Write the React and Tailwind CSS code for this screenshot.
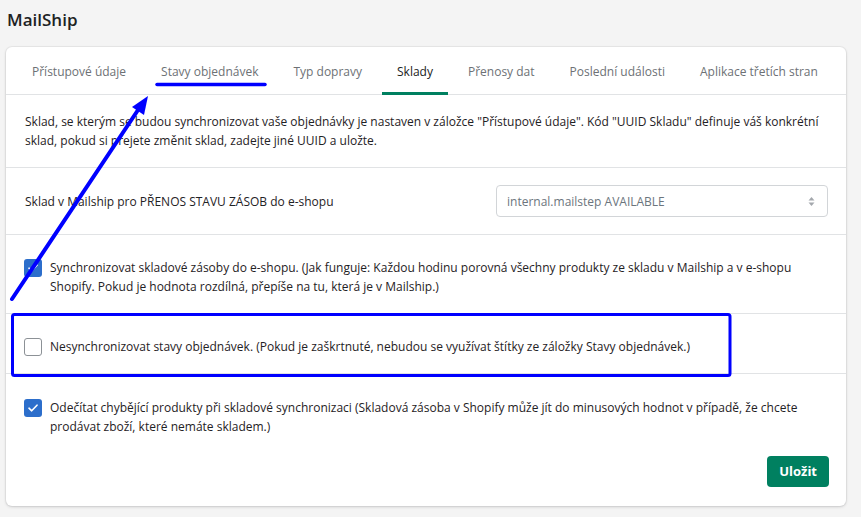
const tabs = [
  'Přístupové údaje',
  'Stavy objednávek',
  'Typ dopravy',
  'Sklady',
  'Přenosy dat',
  'Poslední události',
  'Aplikace třetích stran',
];

const Checkbox = ({ checked }) =>
  checked ? (
    <span className="mt-[1px] flex h-[18px] w-[18px] shrink-0 items-center justify-center rounded-[3px] bg-[#2c6ecb]">
      <svg width="10" height="8" viewBox="0 0 10 8" fill="none">
        <path d="M1 4.2 3.7 6.8 9 1.2" stroke="white" strokeWidth="1.6" strokeLinecap="round" strokeLinejoin="round" />
      </svg>
    </span>
  ) : (
    <span className="mt-[1px] h-[18px] w-[18px] shrink-0 rounded-[3px] border border-[#8c9196] bg-white" />
  );

const CheckRow = ({ checked, children }) => (
  <div className="flex gap-[8px]">
    <Checkbox checked={checked} />
    <p>{children}</p>
  </div>
);

export default function App() {
  return (
    <div className="relative min-h-screen bg-[#f4f4f4] font-['Open_Sans',sans-serif] text-[12px] leading-[19px] text-[#1f2225]">
      <h1 className="px-[7px] pt-[7px] pb-[15px] text-[17px] leading-[25px] font-semibold text-[#202223]">MailShip</h1>

      <div className="ml-[6px] w-[840px] rounded-[6px] bg-white shadow-[0_0_0_1px_rgba(63,63,68,0.05),0_1px_3px_rgba(63,63,68,0.2)]">
        <div className="flex gap-[5px] border-b border-[#e1e3e5] pl-[11px]">
          {tabs.map((t) => (
            <div
              key={t}
              className={`-mb-px flex h-[48px] items-center border-b-[3px] px-[15px] pt-[3px] whitespace-nowrap ${
                t === 'Sklady' ? 'border-[#008060] text-[#202223]' : 'border-transparent text-[#6d7175]'
              }`}
            >
              {t}
            </div>
          ))}
        </div>

        <div className="border-b border-[#e1e3e5] px-[19px] py-[17px]">
          <p>
            Sklad, se kterým se budou synchronizovat vaše objednávky je nastaven v záložce "Přístupové údaje". Kód "UUID Skladu" definuje váš konkrétní sklad, pokud si přejete změnit sklad, zadejte jiné UUID a uložte.
          </p>
        </div>

        <div className="flex items-center justify-between border-b border-[#e1e3e5] pl-[19px] pr-[18px] py-[17px]">
          <span>Sklad v Mailship pro PŘENOS STAVU ZÁSOB do e-shopu</span>
          <div className="flex h-[32px] w-[332px] items-center justify-between rounded-[4px] border border-[#d2d5d8] pl-[10px] pr-[12px] text-[#6c757d]">
            <span>internal.mailstep AVAILABLE</span>
            <svg width="7" height="11" viewBox="0 0 7 11" fill="#a4a8ad">
              <path d="M3.5 1 6.5 4.5H0.5Z" />
              <path d="M3.5 10 6.5 6.5H0.5Z" />
            </svg>
          </div>
        </div>

        <div className="border-b border-[#e1e3e5] px-[18px] pt-[23px] pb-[17px]">
          <CheckRow checked>
            Synchronizovat skladové zásoby do e-shopu. (Jak funguje: Každou hodinu porovná všechny produkty ze skladu v Mailship a v e-shopu Shopify. Pokud je hodnota rozdílná, přepíše na tu, která je v Mailship.)
          </CheckRow>
        </div>

        <div className="border-b border-[#e1e3e5] px-[18px] pt-[23px] pb-[17px]">
          <CheckRow>
            Nesynchronizovat stavy objednávek. (Pokud je zaškrtnuté, nebudou se využívat štítky ze záložky Stavy objednávek.)
          </CheckRow>
        </div>

        <div className="pl-[18px] pr-[17px] pt-[24px] pb-[19px]">
          <CheckRow checked>
            Odečítat chybějící produkty při skladové synchronizaci (Skladová zásoba v Shopify může jít do minusových hodnot v případě, že chcete prodávat zboží, které nemáte skladem.)
          </CheckRow>
          <div className="mt-[20px] flex justify-end">
            <button className="h-[31px] rounded-[4px] bg-[#008060] px-[12px] text-[13px] font-bold text-white">Uložit</button>
          </div>
        </div>
      </div>

      <svg className="pointer-events-none absolute inset-0" width="861" height="517" viewBox="0 0 861 517" fill="none">
        <line x1="157" y1="84.5" x2="265" y2="84.5" stroke="#0000ff" strokeWidth="3.5" strokeLinecap="round" />
        <line x1="12" y1="299" x2="140" y2="107" stroke="#0000ff" strokeWidth="4" strokeLinecap="round" />
        <path d="M148 96 132 107 144 115Z" fill="#0000ff" />
        <rect x="12.5" y="314.5" width="717.5" height="61" rx="2" stroke="#0000ff" strokeWidth="3" />
      </svg>
    </div>
  );
}
